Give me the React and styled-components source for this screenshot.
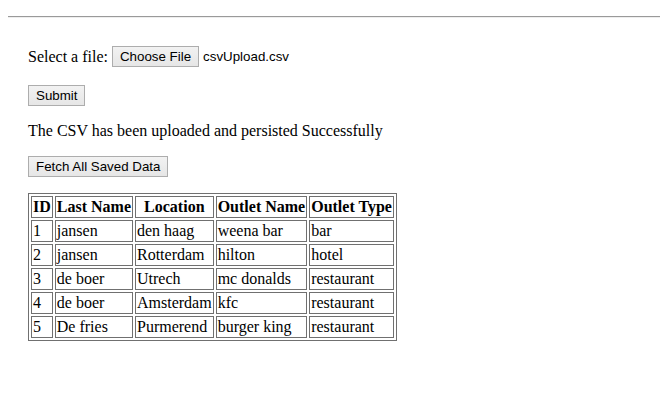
import React from 'react';
import styled, { createGlobalStyle } from 'styled-components';

const GlobalStyle = createGlobalStyle`
  html {
    overflow: hidden;
  }
  body {
    margin: 8px 0 8px 8px;
    background: #fff;
    color: #000;
    font-family: "Liberation Serif", "Times New Roman", serif;
    font-size: 16px;
  }
`;

const Rule = styled.hr`
  display: block;
  margin: 8px 0;
  border: 0;
  border-top: 1px solid #9a9a9a;
  border-bottom: 1px solid #eeeeee;
  height: 0;
`;

const Page = styled.div`
  padding: 20px 20px 0;
`;

const Line = styled.div`
  display: flex;
  align-items: center;
  margin-bottom: ${(p) => p.space || 16}px;
  min-height: 21px;
`;

const Button = styled.button`
  font-family: "Liberation Sans", Arial, sans-serif;
  font-size: 13.33px;
  color: #000;
  padding: 1px 7px;
  height: 21px;
  border: 1px solid #adadad;
  border-radius: 0;
  background: linear-gradient(#f2f2f2, #e6e6e6);
  cursor: pointer;
`;

const FileName = styled.span`
  font-family: "Liberation Sans", Arial, sans-serif;
  font-size: 13.33px;
  margin-left: 4px;
`;

const Message = styled.p`
  margin: 0 0 16px;
  line-height: 18px;
`;

const Table = styled.table`
  border: 1px solid #707070;
  border-spacing: 2px;
  border-collapse: separate;
  font-size: 16px;
`;

const Head = styled.th`
  border: 1px solid #707070;
  padding: 1px;
  font-weight: bold;
  text-align: center;
  line-height: 18px;
`;

const Cell = styled.td`
  border: 1px solid #707070;
  padding: 1px;
  line-height: 18px;
`;

const rows = [
  [1, 'jansen', 'den haag', 'weena bar', 'bar'],
  [2, 'jansen', 'Rotterdam', 'hilton', 'hotel'],
  [3, 'de boer', 'Utrech', 'mc donalds', 'restaurant'],
  [4, 'de boer', 'Amsterdam', 'kfc', 'restaurant'],
  [5, 'De fries', 'Purmerend', 'burger king', 'restaurant'],
];

const headers = ['ID', 'Last Name', 'Location', 'Outlet Name', 'Outlet Type'];

export default function App() {
  return (
    <>
      <GlobalStyle />
      <Rule />
      <Page>
        <Line space={18}>
          <span>Select a file:&nbsp;</span>
          <Button type="button">Choose File</Button>
          <FileName>csvUpload.csv</FileName>
        </Line>
        <Line space={16}>
          <Button type="button">Submit</Button>
        </Line>
        <Message>The CSV has been uploaded and persisted Successfully</Message>
        <Line space={16}>
          <Button type="button">Fetch All Saved Data</Button>
        </Line>
        <Table>
          <thead>
            <tr>
              {headers.map((h) => (
                <Head key={h}>{h}</Head>
              ))}
            </tr>
          </thead>
          <tbody>
            {rows.map((r) => (
              <tr key={r[0]}>
                {r.map((c, i) => (
                  <Cell key={i}>{c}</Cell>
                ))}
              </tr>
            ))}
          </tbody>
        </Table>
      </Page>
    </>
  );
}
